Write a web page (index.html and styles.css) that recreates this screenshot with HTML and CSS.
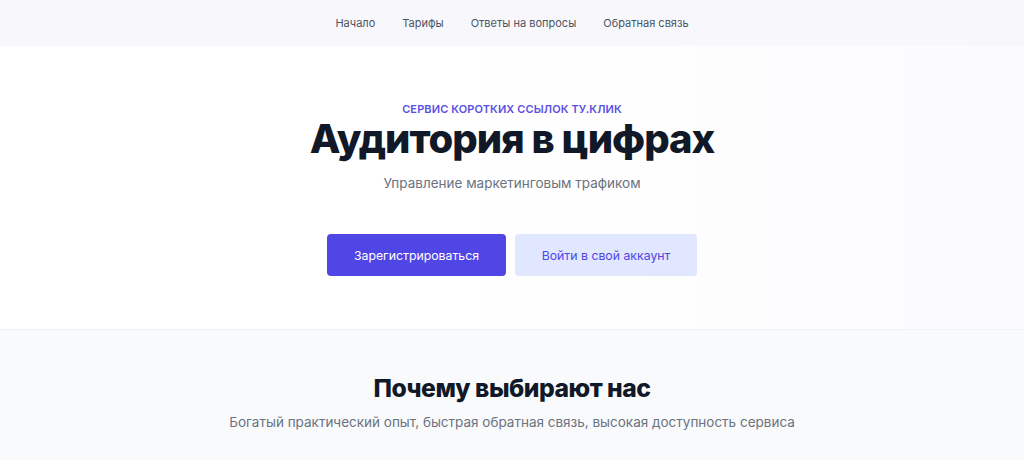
FILE: index.html
```html
<!DOCTYPE html>
<html lang="ru">

<head>
    <meta charset="UTF-8">
    <meta name="viewport" content="width=device-width, initial-scale=1.0">
    <title>ту.клик — сервис коротких ссылок</title>
    <link rel="stylesheet" href="styles.css">
</head>

<body>
    <header class="top">
        <nav class="nav">
            <a href="#">Начало</a>
            <a href="#">Тарифы</a>
            <a href="#">Ответы на вопросы</a>
            <a href="#">Обратная связь</a>
        </nav>
    </header>

    <section class="hero">
        <p class="eyebrow">Сервис коротких ссылок ту.клик</p>
        <h1>Аудитория в цифрах</h1>
        <p class="lead">Управление маркетинговым трафиком</p>
        <div class="actions">
            <a class="btn btn-primary" href="#">Зарегистрироваться</a>
            <a class="btn btn-soft" href="#">Войти в свой аккаунт</a>
        </div>
    </section>

    <section class="features">
        <h2>Почему выбирают нас</h2>
        <p class="lead">Богатый практический опыт, быстрая обратная связь, высокая доступность сервиса</p>
    </section>
</body>

</html>
```

FILE: styles.css
```css
body {
    margin: 0;
    font-family: Inter, 'Noto Sans', sans-serif;
    color: #111827;
    background-color: #f9fafb;
    -webkit-font-smoothing: antialiased;
}

a {
    text-decoration: none;
}

p {
    margin: 0;
}

.top {
    background-color: #f8f8fc;
    height: 46px;
    display: flex;
    justify-content: center;
    align-items: center;
}

.nav {
    display: flex;
    gap: 27px;
}

.nav a {
    font-size: 11px;
    color: #4b5563;
}

.hero {
    background: linear-gradient(90deg, #ffffff 45%, #fbfbfe 100%);
    height: 284px;
    border-bottom: 1px solid #f0f0f2;
    display: flex;
    flex-direction: column;
    align-items: center;
    padding-top: 55px;
    box-sizing: border-box;
}

.eyebrow {
    font-size: 11px;
    line-height: 16px;
    font-weight: 600;
    letter-spacing: 0.01em;
    text-transform: uppercase;
    color: #5b4fe3;
}

h1 {
    margin: 0;
    font-size: 40px;
    font-weight: 800;
    letter-spacing: -0.025em;
    line-height: 44px;
}

.lead {
    font-size: 13.5px;
    line-height: 20px;
    color: #6b7280;
}

.hero .lead {
    margin-top: 12px;
}

.actions {
    display: flex;
    gap: 9px;
    margin-top: 41px;
}

.btn {
    height: 42px;
    display: flex;
    align-items: center;
    justify-content: center;
    border-radius: 4px;
    font-size: 12.3px;
}

.btn-primary {
    width: 179px;
    background-color: #4f46e5;
    color: #fff;
}

.btn-soft {
    width: 182px;
    background-color: #e0e7ff;
    color: #4f46e5;
}

.features {
    background-color: #f9fafb;
    display: flex;
    flex-direction: column;
    align-items: center;
    padding-top: 42px;
}

h2 {
    margin: 0;
    font-size: 24.7px;
    font-weight: 800;
    letter-spacing: -0.02em;
    line-height: 32px;
}

.features .lead {
    margin-top: 8px;
}
```
